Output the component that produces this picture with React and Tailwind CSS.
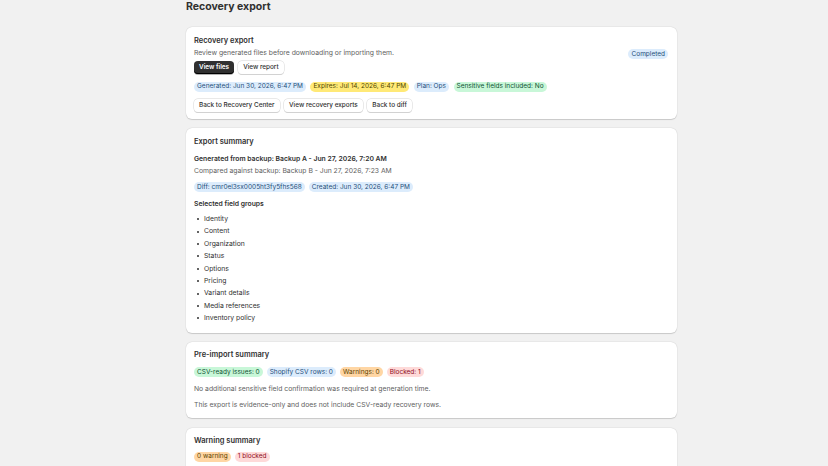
import React from "react";

const tones = {
  info: "bg-[#dcecfc] text-[#1f4f7a]",
  attention: "bg-[#ffe977] text-[#4f4700]",
  success: "bg-[#c8f7d8] text-[#0c5132]",
  warning: "bg-[#ffd6a4] text-[#5e4200]",
  critical: "bg-[#fedad9] text-[#8e0b21]",
};

function Badge({ tone = "info", children }) {
  return (
    <span className={`inline-flex items-center h-[10px] px-[3px] rounded-[5px] text-[6.5px] leading-none whitespace-nowrap ${tones[tone]}`}>
      {children}
    </span>
  );
}

function Btn({ primary, children }) {
  return primary ? (
    <button className="h-[13px] px-[5px] rounded-[4px] bg-[#303030] text-white text-[6.4px] font-semibold leading-none shadow-[inset_0_-1px_0_#000,0_1px_0_rgba(0,0,0,0.3)]">
      {children}
    </button>
  ) : (
    <button className="h-[13px] px-[5px] rounded-[4px] bg-white text-[#303030] text-[6.4px] font-medium leading-none shadow-[0_0_0_0.5px_#d4d4d4,0_1px_0_#d0d0d0]">
      {children}
    </button>
  );
}

function Card({ children, className = "" }) {
  return (
    <div className={`bg-white rounded-[6px] shadow-[0_0.5px_1px_rgba(0,0,0,0.15),0_0_0_0.5px_rgba(0,0,0,0.05)] px-[8px] ${className}`}>
      {children}
    </div>
  );
}

export default function App() {
  const groups = ["Identity", "Content", "Organization", "Status", "Options", "Pricing", "Variant details", "Media references", "Inventory policy"];
  return (
    <div className="min-h-[466px] bg-[#f1f1f1] text-[#303030] overflow-hidden" style={{ fontFamily: "Inter, sans-serif" }}>
      <div className="w-[491px] ml-[186px] flex flex-col">
        <h1 className="text-[10.5px] font-bold leading-[14px]">Recovery export</h1>
        <div className="mt-[13px] flex flex-col gap-[9.5px]">
          <Card className="pt-[8px] pb-[7px]">
            <div className="flex items-start justify-between">
              <div className="flex flex-col">
                <div className="text-[7.5px] font-semibold leading-[12px]">Recovery export</div>
                <div className="text-[6.8px] text-[#616161] leading-[12px]">Review generated files before downloading or importing them.</div>
                <div className="flex gap-[4px] mt-[2px]">
                  <Btn primary>View files</Btn>
                  <Btn>View report</Btn>
                </div>
              </div>
              <div className="flex mt-[14px] mr-[1px]"><Badge>Completed</Badge></div>
            </div>
            <div className="flex gap-[4.5px] mt-[7.5px]">
              <Badge>Generated: Jun 30, 2026, 6:47 PM</Badge>
              <Badge tone="attention">Expires: Jul 14, 2026, 6:47 PM</Badge>
              <Badge>Plan: Ops</Badge>
              <Badge tone="success">Sensitive fields included: No</Badge>
            </div>
            <div className="flex gap-[4.5px] mt-[7px]">
              <Btn>Back to Recovery Center</Btn>
              <Btn>View recovery exports</Btn>
              <Btn>Back to diff</Btn>
            </div>
          </Card>
          <Card className="pt-[8px] pb-[8px]">
            <div className="text-[7.5px] font-semibold leading-[12px]">Export summary</div>
            <div className="text-[6.8px] font-semibold leading-[12px] mt-[5px]">Generated from backup: Backup A - Jun 27, 2026, 7:20 AM</div>
            <div className="text-[6.8px] text-[#616161] leading-[12px]">Compared against backup: Backup B - Jun 27, 2026, 7:23 AM</div>
            <div className="flex gap-[4px] mt-[5px]">
              <Badge>Diff: cmr0el3sx0005ht3fy5fhs568</Badge>
              <Badge>Created: Jun 30, 2026, 6:47 PM</Badge>
            </div>
            <div className="text-[6.8px] font-semibold leading-[12px] mt-[6px]">Selected field groups</div>
            <ul className="mt-[3px] flex flex-col">
              {groups.map((g) => (
                <li key={g} className="flex items-center h-[12.4px] text-[6.8px]">
                  <span className="w-[2px] h-[2px] rounded-full bg-[#303030] ml-[3px] mr-[5px]" />
                  {g}
                </li>
              ))}
            </ul>
          </Card>
          <Card className="pt-[7px] pb-[7px]">
            <div className="text-[7.5px] font-semibold leading-[12px]">Pre-import summary</div>
            <div className="flex gap-[4px] mt-[6px]">
              <Badge tone="success">CSV-ready issues: 0</Badge>
              <Badge>Shopify CSV rows: 0</Badge>
              <Badge tone="warning">Warnings: 0</Badge>
              <Badge tone="critical">Blocked: 1</Badge>
            </div>
            <div className="text-[6.8px] text-[#616161] leading-[12px] mt-[6px]">No additional sensitive field confirmation was required at generation time.</div>
            <div className="text-[6.8px] text-[#616161] leading-[12px] mt-[4px]">This export is evidence-only and does not include CSV-ready recovery rows.</div>
          </Card>
          <Card className="pt-[7px] pb-[8px]">
            <div className="text-[7.5px] font-semibold leading-[12px]">Warning summary</div>
            <div className="flex gap-[4px] mt-[5px]">
              <Badge tone="warning">0 warning</Badge>
              <Badge tone="critical">1 blocked</Badge>
            </div>
            <div className="h-[40px]" />
          </Card>
        </div>
      </div>
    </div>
  );
}
